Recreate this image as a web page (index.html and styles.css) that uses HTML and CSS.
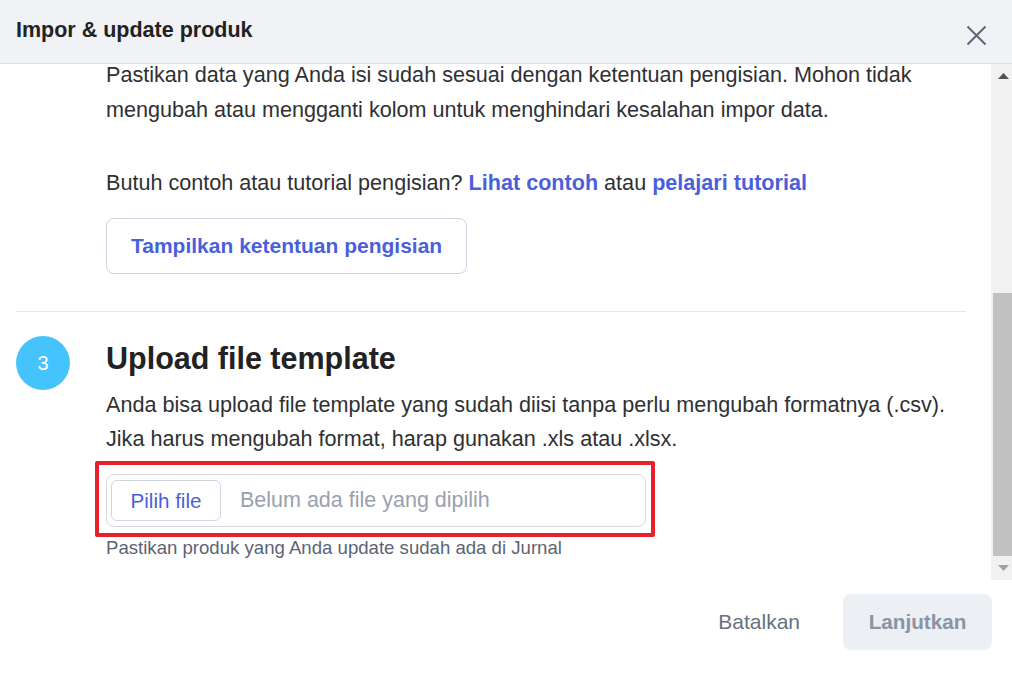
FILE: index.html
```html
<!DOCTYPE html>
<html>
	<head>
		<meta charset="utf-8" />
		<title>Impor &amp; update produk</title>
		<link rel="stylesheet" href="styles.css">
	</head>
	<body>
		<div class="modal">
			<header class="modal-header">
				<h1 class="modal-title">Impor &amp; update produk</h1>
				<button class="close-btn" type="button">
					<svg width="21" height="21" viewBox="0 0 21 21"><path d="M1.5 1.5 L19.5 19.5 M19.5 1.5 L1.5 19.5" stroke="#5f6775" stroke-width="2" fill="none"/></svg>
				</button>
			</header>

			<div class="modal-main">
				<div class="modal-body" id="modalBody">
					<!-- langkah 1 -->
					<section class="step">
						<div class="step-num">1</div>
						<div class="step-main">
							<h2 class="step-title">Download file template</h2>
							<p class="text">Download file template produk terlebih dahulu. File berisi data produk yang sudah ada di Jurnal Anda saat ini.</p>
							<button class="btn-outline" type="button">Download template</button>
						</div>
					</section>

					<!-- langkah 2 -->
					<section class="step">
						<div class="step-num">2</div>
						<div class="step-main">
							<h2 class="step-title">Isi file template</h2>
							<p class="text">Ubah data produk pada file template yang sudah didownload.</p>
							<p class="text">Pastikan data yang Anda isi sudah sesuai dengan ketentuan pengisian. Mohon tidak mengubah atau mengganti kolom untuk menghindari kesalahan impor data.</p>
							<p class="text">Butuh contoh atau tutorial pengisian? <a href="">Lihat contoh</a> atau <a href="">pelajari tutorial</a></p>
							<button class="btn-outline btn-rules" type="button">Tampilkan ketentuan pengisian</button>
						</div>
					</section>

					<!-- langkah 3 -->
					<section class="step">
						<div class="step-num">3</div>
						<div class="step-main">
							<h2 class="step-title">Upload file template</h2>
							<p class="text text-tight">Anda bisa upload file template yang sudah diisi tanpa perlu mengubah formatnya (.csv). Jika harus mengubah format, harap gunakan .xls atau .xlsx.</p>
							<div class="file-field">
								<button class="file-btn" type="button">Pilih file</button>
								<span class="file-name">Belum ada file yang dipilih</span>
								<span class="mark"></span>
							</div>
							<p class="hint">Pastikan produk yang Anda update sudah ada di Jurnal</p>
						</div>
					</section>
				</div>

				<div class="scrollbar">
					<div class="sb-btn">
						<svg width="11" height="6" viewBox="0 0 11 6"><polygon points="0,6 5.5,0 11,6" fill="#505050"/></svg>
					</div>
					<div class="sb-track">
						<div class="sb-thumb"></div>
					</div>
					<div class="sb-btn sb-btn-down">
						<svg width="11" height="6" viewBox="0 0 11 6"><polygon points="0,0 11,0 5.5,6" fill="#a3a3a3"/></svg>
					</div>
				</div>
			</div>

			<footer class="modal-footer">
				<button class="btn-cancel" type="button">Batalkan</button>
				<button class="btn-next" type="button" disabled>Lanjutkan</button>
			</footer>
		</div>
		<script type="text/javascript">
			//scroll ke bawah
			var body = document.getElementById("modalBody");
			body.scrollTop = body.scrollHeight;
		</script>
	</body>
</html>
```
FILE: styles.css
```css
*{
	margin: 0;
	padding: 0;
	box-sizing: border-box;
}

body{
	font-family: "Liberation Sans", Arial, sans-serif;
	color: #2f3033;
	background: #fff;
}

a{
	text-decoration: none;
	color: #4a5fdc;
	font-weight: bold;
}

button{
	font-family: inherit;
	background: none;
	border: none;
	cursor: pointer;
}

.modal{
	width: 1012px;
	height: 679px;
	display: flex;
	flex-direction: column;
	overflow: hidden;
}

/* header */
.modal-header{
	height: 64px;
	flex-shrink: 0;
	display: flex;
	align-items: center;
	justify-content: space-between;
	padding: 0 25px 0 16px;
	background: #f1f2f6;
	border-bottom: 1px solid #dcdfe5;
}

.modal-title{
	font-size: 21.5px;
	font-weight: bold;
	color: #222;
	margin-top: -3px;
}

.close-btn{
	display: flex;
	margin-top: 7px;
}

/* body */
.modal-main{
	flex: 1;
	min-height: 0;
	display: flex;
}

.modal-body{
	flex: 1;
	overflow: hidden;
	padding: 0 25px 0 16px;
}

.scrollbar{
	width: 21px;
	flex-shrink: 0;
	display: flex;
	flex-direction: column;
	background: #f1f1f1;
}

.sb-btn{
	height: 20px;
	display: flex;
	justify-content: center;
	align-items: flex-start;
	padding: 9px 0 0 3px;
}

.sb-btn-down{
	padding-top: 5px;
}

.sb-track{
	flex: 1;
	display: flex;
	flex-direction: column;
	justify-content: flex-end;
	padding: 0 0 4px 2px;
}

.sb-thumb{
	height: 263px;
	background: #c1c1c1;
}

.step{
	display: flex;
	gap: 36px;
	padding: 24px 0 37px;
}

.step + .step{
	border-top: 1px solid #e3e6eb;
}

.step:last-child{
	padding-bottom: 21px;
}

.step-num{
	width: 54px;
	height: 54px;
	flex-shrink: 0;
	border-radius: 50%;
	background: #45c3fd;
	color: #fff;
	font-size: 20px;
	display: flex;
	align-items: center;
	justify-content: center;
}

.step-main{
	flex: 1;
}

.step-title{
	font-size: 30.5px;
	font-weight: bold;
	line-height: 45px;
	color: #222;
}

.text{
	font-size: 21.6px;
	line-height: 35px;
	color: #2f3033;
	margin-top: 5px;
}

.text + .text{
	margin-top: 38px;
}

.text-tight{
	line-height: 34px;
	margin-top: 7px;
}

.btn-outline{
	margin-top: 21px;
	height: 56px;
	padding: 0 24px;
	border: 1px solid #cdd3de;
	border-radius: 8px;
	background: #fff;
	color: #4a5fdc;
	font-size: 21px;
	font-weight: bold;
}

.btn-rules{
	margin-top: 18px;
}

/* input file */
.file-field{
	position: relative;
	width: 540px;
	height: 53px;
	margin-top: 18px;
	padding: 5px 4px;
	display: flex;
	align-items: center;
	gap: 19px;
	border: 1px solid #d5d9e1;
	border-radius: 8px;
}

.file-btn{
	height: 41px;
	width: 110px;
	border: 1px solid #d0d5de;
	border-radius: 6px;
	background: #fff;
	color: #4a5fdc;
	font-size: 20.6px;
}

.file-name{
	font-size: 21.5px;
	color: #9aa1ae;
}

.mark{
	position: absolute;
	top: -14px;
	left: -12px;
	right: -10px;
	bottom: -11px;
	border: 4px solid #e6212b;
	border-radius: 2px;
}

.hint{
	margin-top: 10px;
	font-size: 18.6px;
	line-height: 22px;
	color: #5c6473;
}

/* footer */
.modal-footer{
	height: 99px;
	flex-shrink: 0;
	display: flex;
	justify-content: flex-end;
	align-items: flex-start;
	gap: 19px;
	padding: 14px 20px 0;
}

.btn-cancel{
	height: 56px;
	padding: 0 24px;
	color: #687083;
	font-size: 21px;
}

.btn-next{
	height: 56px;
	width: 149px;
	border-radius: 8px;
	background: #eceff3;
	color: #8b93a5;
	font-size: 20.7px;
	font-weight: bold;
	cursor: default;
}
```
